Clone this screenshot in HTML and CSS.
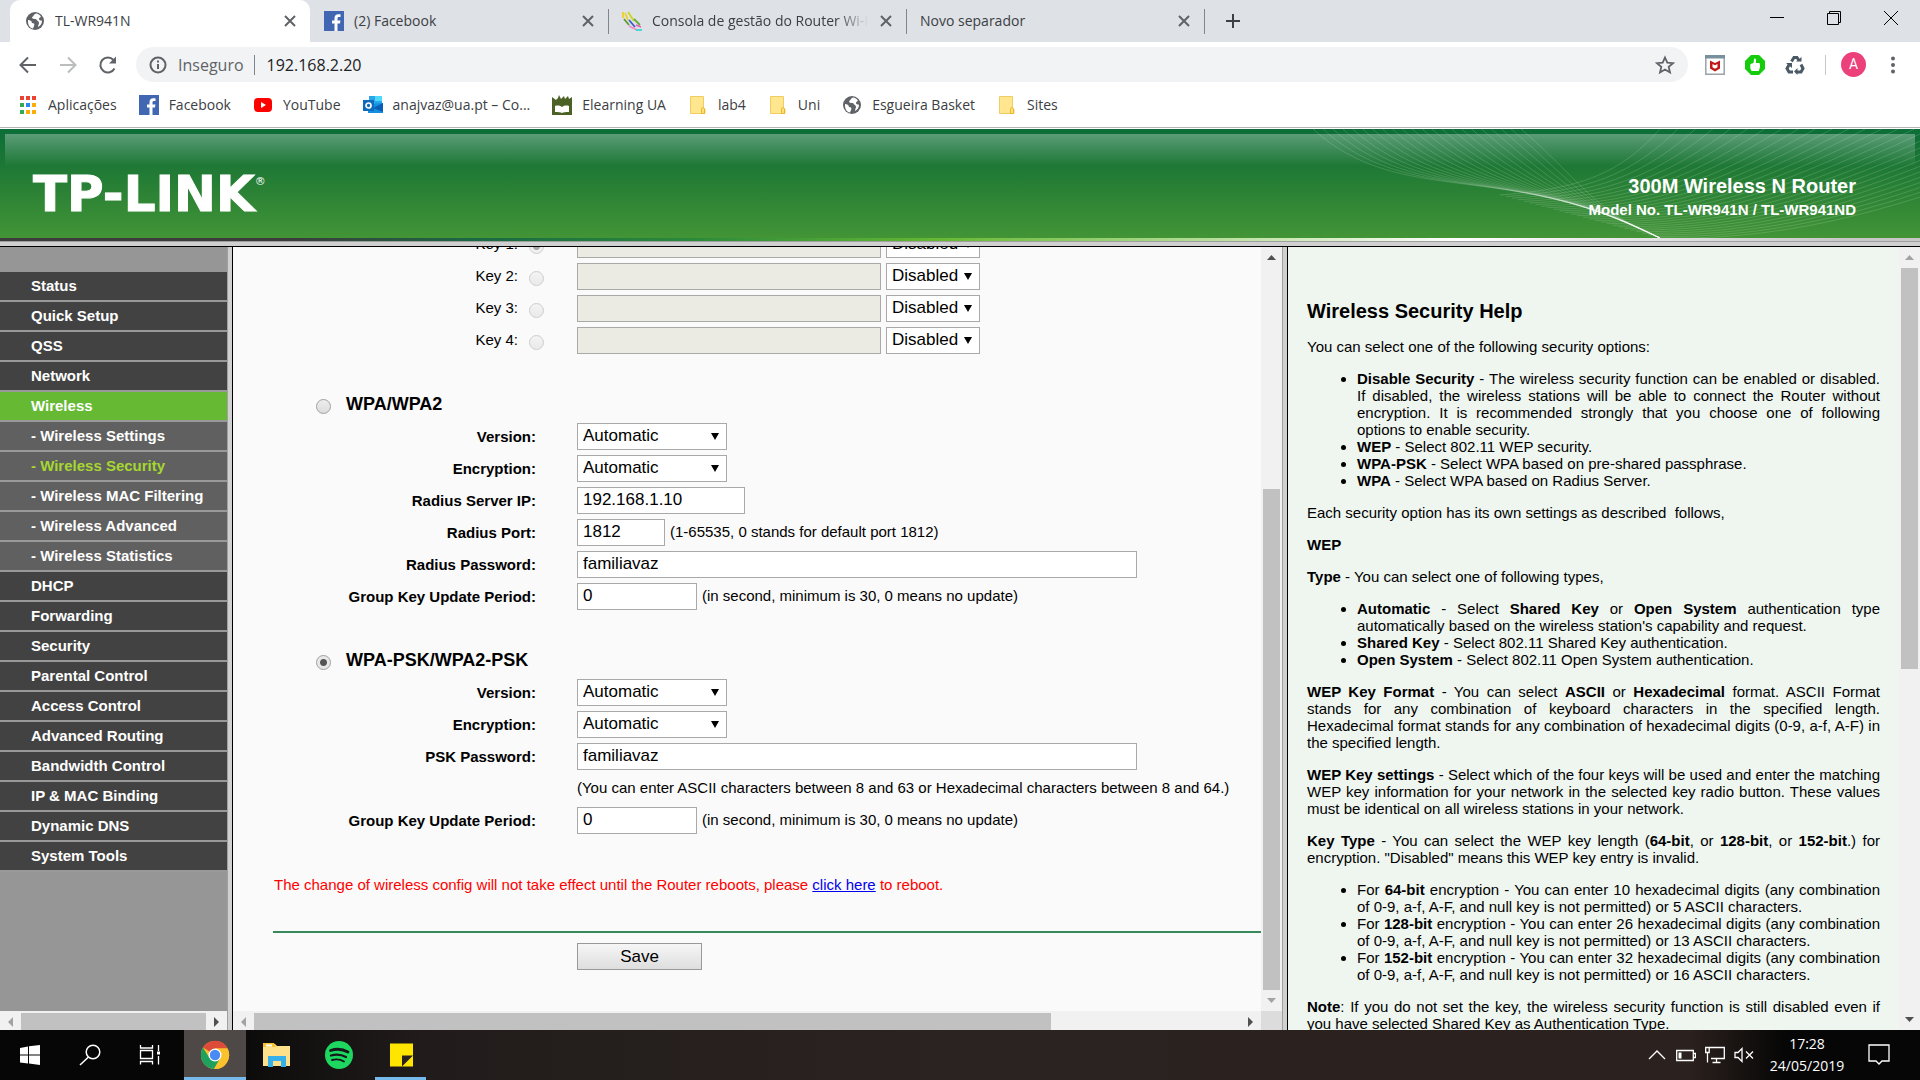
FILE: index.html
```html
<!DOCTYPE html>
<html lang="pt">
<head>
<meta charset="utf-8">
<title>TL-WR941N</title>
<link rel="stylesheet" href="styles.css">
</head>
<body>
<svg class="defs" aria-hidden="true">
  <symbol id="globe" viewBox="0 0 20 20"><circle cx="10" cy="10" r="9" fill="#5f6368"/><path d="M3 9c2 0 4 1 4 3 2 0 3 1 2 3l-1 2.500C5 17 2.500 14 3 9zM11 2.500c-3 1-2 3-4 3.500 0 2 2 2 4 2 1 2 3 2 3 4 0 1-1 2-1 4 2-1 4-3 4-6 0-1-3 0-3-2 0-1 1-2 2-2-1-2-3-3.500-5-3.500z" fill="#fff"/></symbol>
  <symbol id="fb" viewBox="0 0 20 20"><path d="M0 0h20v20H0z" fill="#4267b2"/><path d="M10.500 20v-7.500H8V9.500h2.500V7.300c0-2.600 1.500-4 3.800-4h2.200V6h-1.400c-1.300 0-1.600.6-1.600 1.600v1.900h2.900l-.4 3h-2.500V20z" fill="#fff"/></symbol>
  <symbol id="folder" viewBox="0 0 20 20"><path d="M2.500 1.500h13v11.500l1.500 1.500v4h-14.500z" fill="#ffe68f" stroke="#f0cd62"/><path d="M13.500 18.500v-4.500l1-1.500h1l1 1.500v4.500z" fill="#ffe07a" stroke="#e8b92e"/></symbol>
  <symbol id="close" viewBox="0 0 12 12"><path d="M1 1l10 10M11 1L1 11" stroke="#5f6368" stroke-width="2"/></symbol>
</svg>

<header class="browser">
  <div class="tabs">
    <div class="tab active"><svg class="ico"><use href="#globe"/></svg><span class="tab-title">TL-WR941N</span><button class="x" aria-label="Fechar"><svg><use href="#close"/></svg></button></div>
    <div class="tab"><svg class="ico"><use href="#fb"/></svg><span class="tab-title">(2) Facebook</span><button class="x" aria-label="Fechar"><svg><use href="#close"/></svg></button></div>
    <div class="tab sep"><svg class="ico" viewBox="0 0 20 20" fill="none" stroke-width="1.800"><path d="M1 1v6M3 2l3 7" stroke="#f0d020"/><path d="M6 1l6 9" stroke="#c8d820"/><path d="M2 8l5 6" stroke="#5a9c2a"/><path d="M7 9l6 7" stroke="#3c5bc8"/><path d="M12 8l6 6" stroke="#6aa83c"/><path d="M7 15l8 4" stroke="#f18ac8"/><path d="M14 14l5 2" stroke="#e65fb0"/><path d="M14 19h6" stroke="#3ad6cf"/></svg><span class="tab-title fade">Consola de gestão do Router Wi-Fi</span><button class="x" aria-label="Fechar"><svg><use href="#close"/></svg></button></div>
    <div class="tab sep"><span class="tab-title">Novo separador</span><button class="x" aria-label="Fechar"><svg><use href="#close"/></svg></button></div>
    <button class="new-tab" aria-label="Novo separador"><svg viewBox="0 0 16 16"><path d="M8 1v14M1 8h14" stroke="#3c4043" stroke-width="2"/></svg></button>
    <div class="window-buttons">
      <button aria-label="Minimizar"><svg viewBox="0 0 14 14"><path d="M0 6.500h14" stroke="#000"/></svg></button>
      <button aria-label="Restaurar"><svg viewBox="0 0 14 14" fill="none" stroke="#000"><path d="M.5 2.500h11v11H.5zM2.500 2.500v-2h11v11h-2"/></svg></button>
      <button aria-label="Fechar janela"><svg viewBox="0 0 14 14"><path d="M0 0l14 14M14 0L0 14" stroke="#000"/></svg></button>
    </div>
  </div>

  <div class="toolbar">
    <button class="nav" aria-label="Anterior"><svg viewBox="0 0 20 20" fill="none" stroke="#5f6368" stroke-width="2"><path d="M18 10H3M10 2.500L2.500 10l7.500 7.500"/></svg></button>
    <button class="nav" aria-label="Seguinte"><svg viewBox="0 0 20 20" fill="none" stroke="#babcbe" stroke-width="2"><path d="M2 10h15M10 2.500l7.500 7.500-7.500 7.500"/></svg></button>
    <button class="nav" aria-label="Atualizar"><svg viewBox="0 0 20 20" fill="none" stroke="#5f6368" stroke-width="2"><path d="M16.500 13.500A7.500 7.500 0 1 1 15.500 5"/><path d="M18 1.500v7h-7z" fill="#5f6368" stroke="none"/></svg></button>
    <div class="omnibox">
      <svg class="info" viewBox="0 0 18 18" fill="none" stroke="#5f6368" stroke-width="2"><circle cx="9" cy="9" r="7.500"/><path d="M9 8v5M9 4.500v2"/></svg>
      <span class="insecure">Inseguro</span>
      <input class="url" aria-label="Endereço" value="192.168.2.20">
      <button class="star" aria-label="Marcador"><svg viewBox="0 0 20 20" fill="none" stroke="#5f6368" stroke-width="1.800"><path d="M10 2.500l2.300 5.200 5.700.5-4.300 3.700 1.300 5.600-5-3-5 3 1.300-5.600L2 8.200l5.700-.5z"/></svg></button>
    </div>
    <div class="extensions">
      <svg class="ico" viewBox="0 0 20 20"><path d="M.8.8h18.400v18.400H.8z" fill="#fff" stroke="#9aa3a8" stroke-width="1.500"/><path d="M0 0h20v3.500H0z" fill="#78909c"/><path d="M5 5.500l5 2.500 5-2.500v8l-5 3-5-3z" fill="#c01818"/><path d="M7.500 9l2.500 1.300L12.500 9v3.300L10 13.800l-2.500-1.500z" fill="#fff"/></svg>
      <svg class="ico" viewBox="0 0 20 20"><path d="M6 0h8l6 6v8l-6 6H6l-6-6V6z" fill="#14cc0c"/><path d="M5.500 9l3-1 .7-4.500c1.500-.3 2 .8 1.800 2L10.800 8h3.700c1 2 .5 5-.7 8H6.500C5 14 5 11 5.500 9z" fill="#fff"/></svg>
      <svg class="ico" viewBox="0 0 20 20" fill="none" stroke="#4b5966" stroke-width="3"><path d="M6.500 6.500L9 2.500h3l2 3M4.500 9L2 13.500l2 3.500h4M16 9.500l2 4-2 3.500h-4"/><path d="M11 6.500h5.500V2zM1 8h6v5zM12.500 13v7L9 16.500z" fill="#4b5966" stroke="none"/></svg>
      <span class="bar"></span>
      <button class="avatar">A</button>
      <button class="dots" aria-label="Menu"><svg viewBox="0 0 6 18" fill="#5f6368"><circle cx="3" cy="2.500" r="2"/><circle cx="3" cy="9" r="2"/><circle cx="3" cy="15.500" r="2"/></svg></button>
    </div>
  </div>

  <nav class="bookmarks">
    <a href="#"><svg class="ico" viewBox="0 0 20 20"><path d="M2 1h4v4H2zM8 1h4v4H8zM14 1h4v4h-4z" fill="#ea4335"/><path d="M2 8h4v4H2zM2 15h4v4H2z" fill="#34a853"/><path d="M8 8h4v4H8z" fill="#2f86f0"/><path d="M14 8h4v4h-4zM8 15h4v4H8zM14 15h4v4h-4z" fill="#fbae05"/></svg>Aplicações</a>
    <a href="#"><svg class="ico"><use href="#fb"/></svg>Facebook</a>
    <a href="#"><svg class="ico" viewBox="0 0 20 20"><rect x="1" y="3" width="18" height="14" rx="4" fill="#f00"/><path d="M8 7l5 3-5 3z" fill="#fff"/></svg>YouTube</a>
    <a href="#"><svg class="ico" viewBox="0 0 20 20"><path d="M6 1h13v9H6z" fill="#28a8ea"/><path d="M12 1h7v5h-7z" fill="#50d9ff"/><path d="M5 9l15-1v10H5z" fill="#1490df"/><path d="M20 8v9L10 13z" fill="#0a5db5"/><path d="M0 5h11v11H0z" fill="#0f6cbd"/><circle cx="5.500" cy="10.500" r="2.500" fill="none" stroke="#fff" stroke-width="1.700"/></svg>anajvaz@ua.pt – Co...</a>
    <a href="#"><svg class="ico" viewBox="0 0 20 20"><path d="M0 2l4 3 2-2 1-3 2 4 3-3 1 3 3-3 1 3 3-2v18H0z" fill="#4b6125"/><path d="M3 11c3-1 6 0 7 1 1-1 4-2 7-1v6c-3 0-6 0-7 1-1-1-4-1-7-1z" fill="#fff"/></svg>Elearning UA</a>
    <a href="#"><svg class="ico"><use href="#folder"/></svg>lab4</a>
    <a href="#"><svg class="ico"><use href="#folder"/></svg>Uni</a>
    <a href="#"><svg class="ico"><use href="#globe"/></svg>Esgueira Basket</a>
    <a href="#"><svg class="ico"><use href="#folder"/></svg>Sites</a>
  </nav>
</header>

<div class="router">
  <header class="banner">
    <svg class="waves" id="waves" viewBox="0 0 610 109" aria-hidden="true"></svg>
    <div class="gloss"></div>
    <div class="logo">TP-LINK<sup>®</sup></div>
    <div class="model"><strong>300M Wireless N Router</strong><span>Model No. TL-WR941N / TL-WR941ND</span></div>
  </header>
  <div class="strip"></div>

  <div class="frames">
    <div class="frame">
      <nav class="menu">
        <a href="#">Status</a>
        <a href="#">Quick Setup</a>
        <a href="#">QSS</a>
        <a href="#">Network</a>
        <a href="#" class="open">Wireless</a>
        <a href="#" class="sub">- Wireless Settings</a>
        <a href="#" class="sub current">- Wireless Security</a>
        <a href="#" class="sub">- Wireless MAC Filtering</a>
        <a href="#" class="sub">- Wireless Advanced</a>
        <a href="#" class="sub">- Wireless Statistics</a>
        <a href="#">DHCP</a>
        <a href="#">Forwarding</a>
        <a href="#">Security</a>
        <a href="#">Parental Control</a>
        <a href="#">Access Control</a>
        <a href="#">Advanced Routing</a>
        <a href="#">Bandwidth Control</a>
        <a href="#">IP &amp; MAC Binding</a>
        <a href="#">Dynamic DNS</a>
        <a href="#">System Tools</a>
      </nav>
      <div class="hscroll"><i class="arrow left off"></i><span class="thumb"></span><i class="arrow right"></i></div>
    </div>
    <div class="divider"></div>

    <div class="frame main-frame">
      <main class="main">
        <form class="settings">
          <div class="row key"><label for="k1">Key 1:</label><input type="radio" name="key" aria-label="Key 1" checked disabled><div class="field"><input id="k1" class="w-key" disabled><span class="drop"><select aria-label="Key 1 type" class="w-type"><option>Disabled</option></select></span></div></div>
          <div class="row key"><label for="k2">Key 2:</label><input type="radio" name="key" aria-label="Key 2" disabled><div class="field"><input id="k2" class="w-key" disabled><span class="drop"><select aria-label="Key 2 type" class="w-type"><option>Disabled</option></select></span></div></div>
          <div class="row key"><label for="k3">Key 3:</label><input type="radio" name="key" aria-label="Key 3" disabled><div class="field"><input id="k3" class="w-key" disabled><span class="drop"><select aria-label="Key 3 type" class="w-type"><option>Disabled</option></select></span></div></div>
          <div class="row key"><label for="k4">Key 4:</label><input type="radio" name="key" aria-label="Key 4" disabled><div class="field"><input id="k4" class="w-key" disabled><span class="drop"><select aria-label="Key 4 type" class="w-type"><option>Disabled</option></select></span></div></div>

          <div class="section"><input type="radio" name="mode" id="wpa"><label for="wpa">WPA/WPA2</label></div>
          <div class="row"><label for="v1">Version:</label><div class="field"><span class="drop"><select id="v1" class="w-select"><option>Automatic</option></select></span></div></div>
          <div class="row"><label for="e1">Encryption:</label><div class="field"><span class="drop"><select id="e1" class="w-select"><option>Automatic</option></select></span></div></div>
          <div class="row"><label for="ip">Radius Server IP:</label><div class="field"><input id="ip" class="w-ip" value="192.168.1.10"></div></div>
          <div class="row"><label for="port">Radius Port:</label><div class="field"><input id="port" class="w-port" value="1812"><span>(1-65535, 0 stands for default port 1812)</span></div></div>
          <div class="row"><label for="rp">Radius Password:</label><div class="field"><input id="rp" class="w-long" value="familiavaz"></div></div>
          <div class="row"><label for="g1">Group Key Update Period:</label><div class="field"><input id="g1" class="w-period" value="0"><span>(in second, minimum is 30, 0 means no update)</span></div></div>

          <div class="section"><input type="radio" name="mode" id="psk" checked><label for="psk">WPA-PSK/WPA2-PSK</label></div>
          <div class="row"><label for="v2">Version:</label><div class="field"><span class="drop"><select id="v2" class="w-select"><option>Automatic</option></select></span></div></div>
          <div class="row"><label for="e2">Encryption:</label><div class="field"><span class="drop"><select id="e2" class="w-select"><option>Automatic</option></select></span></div></div>
          <div class="row"><label for="pp">PSK Password:</label><div class="field"><input id="pp" class="w-long" value="familiavaz"></div></div>
          <div class="row"><span></span><div class="field"><span>(You can enter ASCII characters between 8 and 63 or Hexadecimal characters between 8 and 64.)</span></div></div>
          <div class="row"><label for="g2">Group Key Update Period:</label><div class="field"><input id="g2" class="w-period" value="0"><span>(in second, minimum is 30, 0 means no update)</span></div></div>

          <p class="warning">The change of wireless config will not take effect until the Router reboots, please <a href="#">click here</a> to reboot.</p>
          <div class="actions"><button type="button" class="save">Save</button></div>
        </form>
      </main>
      <div class="vscroll"><i class="arrow up"></i><span class="space"></span><span class="thumb"></span><i class="arrow down off"></i></div>
      <div class="hscroll"><i class="arrow left off"></i><span class="thumb"></span><span class="space"></span><i class="arrow right"></i></div>
      <div class="corner"></div>
    </div>
    <div class="divider"></div>

    <div class="frame help-frame">
      <article class="help">
        <h1>Wireless Security Help</h1>
        <p>You can select one of the following security options:</p>
        <ul>
          <li><b>Disable Security</b> - The wireless security function can be enabled or disabled. If disabled, the wireless stations will be able to connect the Router without encryption. It is recommended strongly that you choose one of following options to enable security.</li>
          <li><b>WEP</b> - Select 802.11 WEP security.</li>
          <li><b>WPA-PSK</b> - Select WPA based on pre-shared passphrase.</li>
          <li><b>WPA</b> - Select WPA based on Radius Server.</li>
        </ul>
        <p>Each security option has its own settings as described&nbsp; follows,</p>
        <p><b>WEP</b></p>
        <p><b>Type</b> - You can select one of following types,</p>
        <ul>
          <li><b>Automatic</b> - Select <b>Shared Key</b> or <b>Open System</b> authentication type automatically based on the wireless station's capability and request.</li>
          <li><b>Shared Key</b> - Select 802.11 Shared Key authentication.</li>
          <li><b>Open System</b> - Select 802.11 Open System authentication.</li>
        </ul>
        <p><b>WEP Key Format</b> - You can select <b>ASCII</b> or <b>Hexadecimal</b> format. ASCII Format stands for any combination of keyboard characters in the specified length. Hexadecimal format stands for any combination of hexadecimal digits (0-9, a-f, A-F) in the specified length.</p>
        <p><b>WEP Key settings</b> - Select which of the four keys will be used and enter the matching WEP key information for your network in the selected key radio button. These values must be identical on all wireless stations in your network.</p>
        <p><b>Key Type</b> - You can select the WEP key length (<b>64-bit</b>, or <b>128-bit</b>, or <b>152-bit</b>.) for encryption. "Disabled" means this WEP key entry is invalid.</p>
        <ul>
          <li>For <b>64-bit</b> encryption - You can enter 10 hexadecimal digits (any combination of 0-9, a-f, A-F, and null key is not permitted) or 5 ASCII characters.</li>
          <li>For <b>128-bit</b> encryption - You can enter 26 hexadecimal digits (any combination of 0-9, a-f, A-F, and null key is not permitted) or 13 ASCII characters.</li>
          <li>For <b>152-bit</b> encryption - You can enter 32 hexadecimal digits (any combination of 0-9, a-f, A-F, and null key is not permitted) or 16 ASCII characters.</li>
        </ul>
        <p><b>Note</b>: If you do not set the key, the wireless security function is still disabled even if you have selected Shared Key as Authentication Type.</p>
      </article>
      <div class="vscroll"><i class="arrow up off"></i><span class="thumb"></span><span class="space"></span><i class="arrow down"></i></div>
    </div>
  </div>
</div>

<footer class="taskbar">
  <div class="apps">
    <button aria-label="Iniciar"><svg viewBox="0 0 30 30" fill="#fff"><path d="M5 8l8-1.500V14.500H5zM14 6.300L25 5v9.500H14zM5 15.500h8v8L5 22.500zM14 15.500h11V25l-11-1.500z"/></svg></button>
    <button aria-label="Procurar"><svg viewBox="0 0 30 30" fill="none" stroke="#fff" stroke-width="1.500"><circle cx="18" cy="12" r="6.800"/><path d="M13.500 17L5 25"/></svg></button>
    <button aria-label="Vista de tarefas"><svg viewBox="0 0 30 30" fill="none" stroke="#fff" stroke-width="1.300"><path d="M5.500 10.500h12v8h-12zM5.500 5v3h12V5M5.500 24.500v-3h12v3M23.500 5v6M23.500 16v8.500"/><path d="M22 11.500h3v3h-3z" fill="#fff" stroke="none"/></svg></button>
    <button class="focused" aria-label="Chrome"><svg viewBox="0 0 30 30"><circle cx="15" cy="15" r="14" fill="#fbc22e"/><path d="M15 15L3 7.500A14 14 0 0 1 27.500 8.500H15z" fill="#dd4b39"/><path d="M3 7.500A14 14 0 0 0 14 29l6.500-11.500L9.500 18z" fill="#1fa15d"/><path d="M15 8.500h12.500A14 14 0 0 1 14 29l6.500-10.500z" fill="#fbc22e"/><circle cx="15" cy="15" r="6.500" fill="#fff"/><circle cx="15" cy="15" r="5.200" fill="#4a8af4"/></svg></button>
    <button aria-label="Explorador"><svg viewBox="0 0 30 30"><path d="M1 4h12l2 2h13v20H1z" fill="#ffe08a"/><path d="M1 3h11l2 4H1z" fill="#f8c32c"/><path d="M4 4.500h6v2H4z" fill="#fff"/><path d="M6 16h18v11h-5v-6h-8v6H6z" fill="#35b0ea"/></svg></button>
    <button aria-label="Spotify"><svg viewBox="0 0 30 30" fill="none" stroke="#15181a" stroke-linecap="round"><circle cx="15" cy="15" r="14" fill="#1ed760" stroke="none"/><path d="M6.500 10.500c6-2 12.500-1.300 17.500 1.500" stroke-width="2.800"/><path d="M7 15.500c5-1.500 10.500-1 15 1.500" stroke-width="2.300"/><path d="M8 20c4-1 8.500-.7 12 1.500" stroke-width="1.900"/></svg></button>
    <button class="running" aria-label="Notas"><svg viewBox="0 0 30 30"><path d="M4 3.500h23v23H4z" fill="#ffe500"/><path d="M16 26.500V15.500h11z" fill="#2a2220"/></svg></button>
  </div>
  <div class="tray">
    <svg viewBox="0 0 20 20"><path d="M2 14l8-8 8 8"/></svg>
    <svg viewBox="0 0 20 20"><path d="M.7 5.500h16.600v10H.7zM17.500 8.500h2v4h-2"/><path d="M2.500 7.500h3v6h-3z" fill="#fff" stroke="none"/></svg>
    <svg viewBox="0 0 20 20"><path d="M4 2.500h15.300v11H6M.7 2.500h3.500v5H.7zM2.500 7.500v10M11.500 13.500v4M7.500 17.500h8"/></svg>
    <svg viewBox="0 0 20 20"><path d="M1 7.500h3l4-4v13l-4-4H1zM12 6.500l7 7M19 6.500l-7 7"/></svg>
    <div class="clock"><span>17:28</span><span>24/05/2019</span></div>
    <svg class="note" viewBox="0 0 22 22"><path d="M1 1h20v16h-7l-3 3-3-3H1z"/></svg>
  </div>
</footer>
<script src="waves.js"></script>
</body>
</html>
```
FILE: waves.js
```js
// Two families of fine curves, each blended from a first curve to a last one.
const families = [
  { count: 22, from: [3, 0, 90, 80, 200, 30, 350, 109], to: [211, 0, 270, 50, 280, 80, 350, 109] },
  { count: 28, from: [350, 0, 310, 45, 270, 60, 190, 66], to: [850, -20, 640, 60, 520, 112, 350, 109] }
];
const svg = document.getElementById('waves');
for (const { count, from, to } of families) {
  for (let i = 0; i < count; i++) {
    const p = from.map((v, k) => v + (to[k] - v) * i / (count - 1));
    const path = document.createElementNS('http://www.w3.org/2000/svg', 'path');
    path.setAttribute('d', `M${p[0]} ${p[1]}C${p.slice(2).join(' ')}`);
    svg.appendChild(path);
  }
}
```
FILE: styles.css
```css
* { box-sizing: border-box; }

body {
  margin: 0;
  height: 100vh;
  display: flex;
  flex-direction: column;
  overflow: hidden;
  font: 15px/17px "Liberation Sans", Arial, sans-serif;
  color: #000;
}

button { border: 0; padding: 0; background: none; font: inherit; color: inherit; }
button svg { display: block; }
.defs { display: none; }
.ico { width: 20px; height: 20px; flex: none; }

/* Browser window */
.browser {
  font: 14px/20px "Open Sans", "Noto Sans", sans-serif;
  color: #3c4043;
  background: #fff;
  border-bottom: 1px solid #b4b5b6;
}

.tabs { display: flex; height: 42px; padding-left: 10px; background: #dee1e6; }
.tab {
  display: flex;
  align-items: center;
  gap: 10px;
  width: 298px;
  height: 42px;
  padding: 0 12px 0 14px;
  position: relative;
}
.tab.active { width: 300px; padding-left: 15px; background: #fff; border-radius: 10px 10px 0 0; }
.tab.sep::before {
  content: "";
  position: absolute;
  left: 0;
  top: 9px;
  width: 1px;
  height: 25px;
  background: #80868b;
}
.tab-title { flex: 1; overflow: hidden; white-space: nowrap; }
.fade { -webkit-mask-image: linear-gradient(90deg, #000 86%, transparent); mask-image: linear-gradient(90deg, #000 86%, transparent); }
.x svg { width: 12px; height: 12px; }
.x { padding: 0 2px; }
.new-tab { padding: 0 20px; border-left: 1px solid #80868b; height: 25px; align-self: center; }
.new-tab svg { width: 16px; height: 16px; }
.window-buttons { display: flex; gap: 43px; margin-left: auto; padding: 11px 22px 0 0; align-items: flex-start; }
.window-buttons svg { width: 14px; height: 14px; }

.toolbar { display: flex; align-items: center; height: 45px; padding: 0 24px 0 18px; }
.nav { margin-right: 20px; }
.nav svg { width: 20px; height: 20px; }
.omnibox {
  flex: 1;
  display: flex;
  align-items: center;
  height: 35px;
  margin: 0 17px 0 -2px;
  padding: 0 13px;
  border-radius: 18px;
  background: #f1f3f4;
  font-size: 16px;
}
.info { width: 18px; height: 18px; }
.insecure { margin-left: 11px; padding-right: 10px; border-right: 1px solid #80868b; color: #5f6368; }
.url { flex: 1; margin-left: 12px; padding: 0; border: 0; background: none; font: inherit; color: #202124; }
.star svg { width: 20px; height: 20px; }
.extensions { display: flex; align-items: center; gap: 20px; }
.bar { width: 1px; height: 20px; margin-right: -5px; background: #c6c9cc; }
.avatar { width: 25px; height: 25px; border-radius: 50%; background: #ec407a; color: #fff; font: 14px/25px Roboto, sans-serif; }
.dots { padding-left: 4px; }
.dots svg { width: 6px; height: 18px; }

.bookmarks { display: flex; gap: 22px; height: 40px; padding: 0 18px 4px; align-items: center; }
.bookmarks a { display: flex; align-items: center; gap: 10px; color: inherit; text-decoration: none; white-space: nowrap; }

/* Router banner */
.router { flex: 1; min-height: 0; display: flex; flex-direction: column; padding-top: 1px; background: #fff; }
.banner {
  position: relative;
  display: flex;
  justify-content: space-between;
  align-items: center;
  height: 109px;
  padding: 20px 64px 0 33px;
  background: linear-gradient(#0c6d38, #1e7835 36px, #429436);
  color: #fff;
}
.waves { position: absolute; right: 0; top: 0; width: 610px; height: 109px; fill: none; stroke: rgba(255, 255, 255, 0.15); }
.gloss { position: absolute; left: 5px; right: 5px; top: 5px; height: 32px; background: linear-gradient(rgba(255, 255, 255, 0.32), rgba(255, 255, 255, 0)); }
.logo { position: relative; display: flex; font: bold 50px/48px "DejaVu Sans", sans-serif; -webkit-text-stroke: 1px #fff; }
.logo sup { font: 11px/24px "DejaVu Sans", sans-serif; -webkit-text-stroke: 0; }
.model { position: relative; display: flex; flex-direction: column; gap: 3px; text-align: right; font-weight: bold; padding-top: 4px; }
.model strong { font-size: 20px; line-height: 24px; }
.strip {
  height: 3px;
  background: linear-gradient(90deg, #3b3b3b 15%, #1a6a43 25%, #2a8a3a 36%, #66b933 49%, #cde8b8 67%, #fff 76%, #c8c8c8 96%);
}

/* Frames */
.frames {
  flex: 1;
  min-height: 0;
  display: grid;
  grid-template-columns: 227px 6px minmax(0, 1fr) 6px 632px;
  grid-template-rows: minmax(0, 1fr);
  padding-top: 6px;
  background: linear-gradient(#a0a0a0 1px, #d0d0d0 1px, #d0d0d0 5px, #000 5px, #000 6px, transparent 6px);
}
.divider { background: #d0d0d0; border-left: 1px solid #a0a0a0; border-right: 1px solid #000; }
.frame { display: grid; grid-template-rows: minmax(0, 1fr) auto; min-height: 0; overflow: hidden; }

.menu { padding-top: 25px; background: #969696; overflow: hidden; }
.menu a {
  display: block;
  height: 30px;
  padding-left: 31px;
  border-bottom: 2px solid #999;
  background: #424242;
  color: #fff;
  font-weight: bold;
  line-height: 28px;
  text-decoration: none;
}
.menu .sub { background: #606060; }
.menu .open { background: #66b933; }
.menu .current { color: #a5d730; }

/* Scroll bars */
.hscroll, .vscroll { display: flex; background: #f1f1f1; }
.hscroll { height: 19px; padding-top: 2px; }
.vscroll { width: 21px; padding: 0 2px; flex-direction: column; }
.thumb { flex: 1; background: #c1c1c1; }
.arrow { flex: none; position: relative; width: 21px; height: 21px; }
.vscroll .arrow { width: 17px; }
.arrow::before {
  content: "";
  position: absolute;
  background: #505050;
  clip-path: polygon(50% 0, 100% 100%, 0 100%);
}
.vscroll .arrow::before { inset: 8px 4px; }
.hscroll .arrow::before { inset: 4px 8px 7px; }
.arrow.off::before { background: #a3a3a3; }
.arrow.down::before { clip-path: polygon(0 0, 100% 0, 50% 100%); }
.arrow.left::before { clip-path: polygon(100% 0, 100% 100%, 0 50%); }
.arrow.right::before { clip-path: polygon(0 0, 100% 50%, 0 100%); }
.main-frame { grid-template-columns: minmax(0, 1fr) 21px; }
.main-frame .hscroll .thumb { flex: 80 0 0; }
.main-frame .hscroll .space { flex: 19 0 0; }
.main-frame .vscroll .thumb { flex: 501 0 0; }
.main-frame .vscroll .space { flex: 221 0 0; }
.help-frame .thumb { flex: 401 0 0; }
.help-frame .space { flex: 340 0 0; }
.corner { background: #dcdcdc; }

/* Settings form, scrolled part of a row past the top edge */
.main { background: #fafafa; overflow: hidden; }
.settings { margin-top: -16px; }
.row { display: grid; grid-template-columns: 303px minmax(0, 1fr); column-gap: 41px; height: 32px; line-height: 28px; }
.row > label { text-align: right; font-weight: bold; white-space: nowrap; }
.row.key { grid-template-columns: 285px 15px minmax(0, 1fr); column-gap: 11px; line-height: 26px; }
.row.key > label { font-weight: normal; }
.row.key > .field { padding-left: 22px; }
.field { display: flex; gap: 5px; line-height: 26px; white-space: nowrap; }
.field input, .field select {
  appearance: none;
  height: 27px;
  margin: 0;
  padding: 0 5px 2px;
  border: 1px solid #a9a9a9;
  border-radius: 0;
  background: #fff;
  color: #000;
  font: 17px/20px "Liberation Sans", Arial, sans-serif;
}
.field input:disabled { background: #ebebe4; }
.drop { position: relative; display: flex; height: 27px; }
.drop::after {
  content: "";
  position: absolute;
  right: 8px;
  top: 10px;
  border: 4px solid transparent;
  border-top: 7px solid #000;
  border-bottom: 0;
}
.w-key { width: 304px; }
.w-type { width: 94px; }
.w-select { width: 150px; }
.w-ip { width: 168px; }
.w-port { width: 88px; }
.w-long { width: 560px; }
.w-period { width: 120px; }

input[type="radio"] {
  appearance: none;
  width: 15px;
  height: 15px;
  margin: 8px 0 0;
  border: 1px solid #a0a0a0;
  border-radius: 50%;
  background: linear-gradient(#ededed, #dcdcdc);
}
input[type="radio"]:checked { background: radial-gradient(circle, #555 3px, #e8e8e8 4px); }
input[type="radio"]:disabled { opacity: 0.5; }

.section { display: flex; gap: 15px; height: 32px; margin-top: 32px; padding-left: 83px; font-size: 18px; font-weight: bold; line-height: 26px; }
.warning { margin: 37px 0 0 41px; height: 55px; color: #f00; line-height: 17px; }
.warning a { color: #00e; }
.actions { margin-left: 40px; padding: 10px 0 0 304px; border-top: 2px solid #37885a; }
.save { width: 125px; height: 27px; border: 1px solid #999; background: linear-gradient(#f6f6f6, #dedede); font-size: 17px; line-height: 24px; }

/* Help text */
.help-frame { grid-template-columns: minmax(0, 1fr) 21px; }
.help { padding: 52px 19px 0; background: #eff6f0; text-align: justify; overflow: hidden; }
.help h1 { margin: 0; font-size: 20px; line-height: 24px; }
.help p, .help ul { margin: 15px 0; }
.help ul { padding-left: 50px; }

/* Taskbar */
.taskbar {
  display: flex;
  justify-content: space-between;
  height: 50px;
  background: linear-gradient(90deg, #060606 10%, #211c1b 22%, #2b2321 50%, #2b211e 88%, #060606 93%);
  color: #fff;
}
.apps, .tray { display: flex; align-items: center; }
.apps button { display: grid; place-items: center; width: 62px; height: 50px; border-bottom: 3px solid transparent; border-top: 3px solid transparent; }
.apps button:nth-child(-n+3) { width: 60px; }
.apps .focused { margin-left: 4px; background: #4e4847; border-color: #4e4847 transparent #76b9ed; }
.apps svg { width: 30px; height: 30px; }
.apps .running { width: 51px; margin-left: 5px; border-bottom-color: #76b9ed; }
.tray { gap: 9px; padding-right: 30px; font: 14px/22px "Open Sans", "Noto Sans", sans-serif; }
.tray svg { width: 20px; height: 20px; fill: none; stroke: #fff; stroke-width: 1.300; }
.tray .note { width: 22px; height: 22px; }
.clock { display: flex; flex-direction: column; align-items: center; width: 88px; margin-right: 8px; }
```
